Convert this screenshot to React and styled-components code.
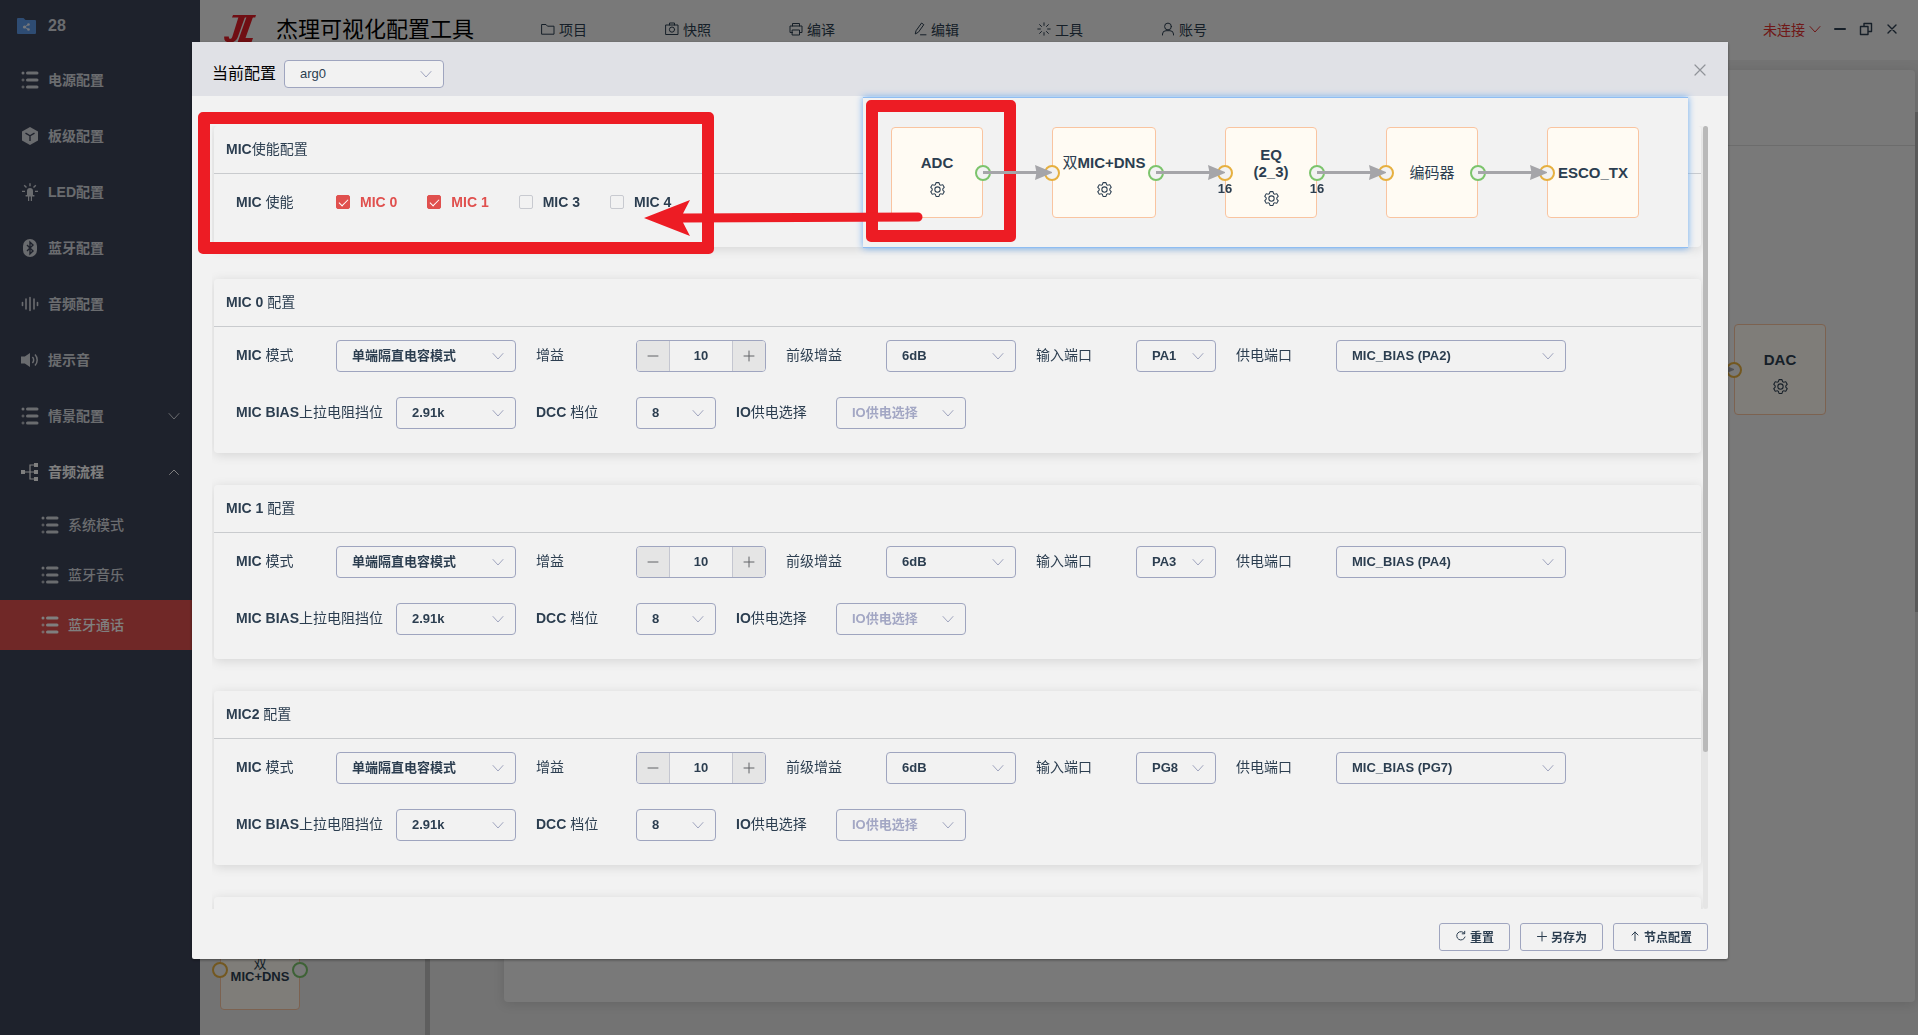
import React, { useId } from "react";
import styled, { createGlobalStyle } from "styled-components";

const GlobalStyle = createGlobalStyle`
  * { box-sizing: border-box; }
  html, body, #root { height: 100%; }
  body {
    margin: 0;
    overflow: hidden;
    font-family: "Liberation Sans", "Noto Sans CJK SC", sans-serif;
    font-size: 14px;
    color: #2c3e50;
  }
  button, input, select { font-family: inherit; color: inherit; }
  button { padding: 0; border: 0; background: none; cursor: pointer; }
`;

/* ---------- icons ---------- */

const Stroke = ({ size = 14, box = 14, width = 1, children }) => (
  <svg
    width={size}
    height={size}
    viewBox={`0 0 ${box} ${box}`}
    fill="none"
    stroke="currentColor"
    strokeWidth={width}
    strokeLinecap="round"
    strokeLinejoin="round"
    aria-hidden="true"
  >
    {children}
  </svg>
);

const Chevron = ({ up }) => (
  <Stroke size={12} box={12}>
    <path d={up ? "M1.5 8.5 6 4l4.5 4.5" : "M1 3.5 6 9l5-5.5"} />
  </Stroke>
);

const Gear = () => (
  <svg width="17" height="17" viewBox="0 0 1024 1024" fill="currentColor" aria-hidden="true">
    <path d="M600.704 64a32 32 0 0 1 30.464 22.208l35.2 109.376c14.784 7.232 28.928 15.36 42.432 24.512l112.384-24.192a32 32 0 0 1 34.432 15.36L944.32 364.8a32 32 0 0 1-4.032 37.504l-77.12 85.12a357.12 357.12 0 0 1 0 49.024l77.12 85.248a32 32 0 0 1 4.032 37.504l-88.704 153.6a32 32 0 0 1-34.432 15.296L708.8 803.904c-13.44 9.088-27.648 17.28-42.368 24.512l-35.264 109.376A32 32 0 0 1 600.704 960H423.296a32 32 0 0 1-30.464-22.208L357.696 828.48a351.616 351.616 0 0 1-42.56-24.64l-112.32 24.256a32 32 0 0 1-34.432-15.36L79.68 659.2a32 32 0 0 1 4.032-37.504l77.12-85.248a357.12 357.12 0 0 1 0-48.896l-77.12-85.248A32 32 0 0 1 79.68 364.8l88.704-153.6a32 32 0 0 1 34.432-15.296l112.32 24.256c13.568-9.152 27.776-17.408 42.56-24.64l35.2-109.312A32 32 0 0 1 423.232 64H600.64zm-23.424 64H446.72l-36.352 113.088-24.512 11.968a294.113 294.113 0 0 0-34.816 20.096l-22.656 15.36-116.224-25.088-65.28 113.152 79.68 88.192-1.92 27.136a293.12 293.12 0 0 0 0 40.192l1.92 27.136-79.808 88.192 65.344 113.152 116.224-25.024 22.656 15.296a294.113 294.113 0 0 0 34.816 20.096l24.512 11.968L446.72 896h130.688l36.48-113.152 24.448-11.904a288.282 288.282 0 0 0 34.752-20.096l22.592-15.296 116.288 25.024 65.28-113.152-79.744-88.192 1.92-27.136a293.12 293.12 0 0 0 0-40.256l-1.92-27.136 79.808-88.128-65.344-113.152-116.288 24.96-22.592-15.232a287.616 287.616 0 0 0-34.752-20.096l-24.448-11.904L577.344 128zM512 320a192 192 0 1 1 0 384 192 192 0 0 1 0-384zm0 64a128 128 0 1 0 0 256 128 128 0 0 0 0-256z" />
  </svg>
);

const ListIcon = () => (
  <svg width="18" height="18" viewBox="0 0 18 18" fill="currentColor" aria-hidden="true">
    <rect x="5" y="0.5" width="12.5" height="3" rx="1.5" />
    <rect x="5" y="7.5" width="12.5" height="3" rx="1.5" />
    <rect x="5" y="14.5" width="12.5" height="3" rx="1.5" />
    <circle cx="2" cy="2" r="1.5" />
    <circle cx="2" cy="9" r="1" fill="none" stroke="currentColor" />
    <circle cx="2" cy="16" r="1" fill="none" stroke="currentColor" />
  </svg>
);

const sideIcons = {
  list: <ListIcon />,
  cube: (
    <svg width="18" height="18" viewBox="0 0 18 18" aria-hidden="true">
      <path d="M9 0l8 4.4v9.2L9 18l-8-4.4V4.4z" fill="currentColor" />
      <path d="M4.5 6.2L9 8.8l4.5-2.6M9 8.8V14" fill="none" stroke="#3d4459" strokeWidth="1.4" />
    </svg>
  ),
  led: (
    <svg width="18" height="18" viewBox="0 0 18 18" fill="currentColor" aria-hidden="true">
      <path d="M6 12V8a3 3 0 0 1 6 0v4h1.4v1.6H11V18H9.8v-4.4H8.2V18H7v-4.4H4.6V12z" />
      <path
        d="M9 .3v3M3.2 2.2l2.3 2.3M14.8 2.2l-2.3 2.3M1 8.4h3M14 8.4h3"
        stroke="currentColor"
        strokeWidth="1.4"
      />
    </svg>
  ),
  bluetooth: (
    <svg width="18" height="18" viewBox="0 0 18 18" aria-hidden="true">
      <rect x="2" y="0" width="14" height="18" rx="7" fill="currentColor" />
      <path d="M6 6l6 6-3 2.8V3.2L12 6l-6 6" fill="none" stroke="#3d4459" strokeWidth="1.4" />
    </svg>
  ),
  wave: (
    <Stroke size={18} box={18} width={1.6}>
      <path d="M1.5 7.5v3M5 4v10M9 2.5v13M13 4v10M16.5 7.5v3" />
    </Stroke>
  ),
  sound: (
    <svg width="18" height="18" viewBox="0 0 18 18" aria-hidden="true">
      <path d="M0 5.5h3.8L9 2v14l-5.2-3.5H0z" fill="currentColor" />
      <path
        d="M11.4 6a4.2 4.2 0 0 1 0 6M14 3.5a8 8 0 0 1 0 11"
        fill="none"
        stroke="currentColor"
        strokeWidth="1.5"
      />
    </svg>
  ),
  flow: (
    <svg width="18" height="18" viewBox="0 0 18 18" aria-hidden="true">
      <path d="M2 9h13M15 2H9v14h6" fill="none" stroke="currentColor" strokeWidth="1.2" />
      <path
        d="M0 7h4v4H0zM13 0h4v4h-4zM13 7h4v4h-4zM13 14h4v4h-4z"
        fill="currentColor"
      />
    </svg>
  ),
};

const menuIcons = {
  folder: <path d="M1 2.5h4l1.5 1.7H13v8H1z" />,
  camera: (
    <>
      <path d="M1 3h12v9.5H1zM4.5 3V1h5v2" />
      <circle cx="7" cy="7.6" r="2.6" />
    </>
  ),
  printer: (
    <>
      <path d="M3.5 4V1.5h7V4M3.5 10.5H1V4h12v6.5h-2.5" />
      <path d="M3.5 8h7v5h-7z" />
    </>
  ),
  edit: <path d="M3.2 8.5 8.6 1l2.2 1.7-5.4 7.5-2.8 1.6zM7.5 12.8H13" />,
  spark: (
    <path d="M7 .8v2.6M7 10.6v2.6M.8 7h2.6M10.6 7h2.6M2.6 2.6l1.9 1.9M9.5 9.5l1.9 1.9M2.6 11.4l1.9-1.9M9.5 4.5l1.9-1.9" />
  ),
  user: (
    <>
      <circle cx="7" cy="4.5" r="3.4" />
      <path d="M1.5 13v-1a3.5 3.5 0 0 1 3.5-3.3h4A3.5 3.5 0 0 1 12.5 12v1" />
    </>
  ),
};

const Logo = () => (
  <svg width="32" height="28" viewBox="0 0 32 28" fill="#e01d26" aria-hidden="true">
    <path d="M9 0H32l-.8 2.6H8z" />
    <path d="M14.5 2H21l-7 19.5C12.6 25.5 10 27.5 5.5 27.5 1.5 27.5-.2 25.5.2 21.5h4.6c0 1.7.4 2.3 1.4 2.3 1.1 0 1.7-.7 2.2-2.3z" />
    <path d="M22.5 2H29l-7.5 21H29l-1.6 4.5H13.5z" />
  </svg>
);

/* ---------- text with heavy Latin and regular Chinese glyphs ---------- */

const Latin = styled.b`
  font-weight: 700;
`;

const Mixed = ({ children }) =>
  children
    .split(/([\x20-\x7e]+)/)
    .filter(Boolean)
    .map((run, i) => (/^[\x20-\x7e]+$/.test(run) ? <Latin key={i}>{run}</Latin> : run));

/* ---------- application shell ---------- */

const Shell = styled.div`
  isolation: isolate;
  display: flex;
  height: 100vh;
  background: #e6e6e6;
`;

const Sidebar = styled.nav`
  flex: 0 0 200px;
  background: #3d4459;
  color: #d5d8de;
`;

const SideHead = styled.div`
  display: flex;
  align-items: center;
  gap: 12px;
  height: 52px;
  padding-left: 17px;
  font-size: 16px;
  font-weight: 700;
`;

const SideItem = styled.a`
  display: flex;
  align-items: center;
  gap: 9px;
  height: ${(p) => (p.$sub ? 50 : 56)}px;
  padding: 0 20px 0 ${(p) => (p.$sub ? 41 : 21)}px;
  color: ${(p) => (p.$bright ? "#ffffff" : "inherit")};
  background: ${(p) => (p.$active ? "#e0504e" : "transparent")};
  font-weight: ${(p) => (p.$sub ? 500 : 600)};
  text-decoration: none;

  span {
    flex: 1;
    padding-bottom: 2px;
  }
`;

const Main = styled.div`
  flex: 1;
  min-width: 0;
  display: flex;
  flex-direction: column;
`;

const TopBar = styled.header`
  flex: 0 0 60px;
  display: flex;
  align-items: center;
  padding: 0 19px 2px 24px;
  background: #f2f2f2;
`;

const AppTitle = styled.h1`
  margin: 0 28px 0 20px;
  padding-top: 2px;
  font-size: 22px;
  line-height: 28px;
  font-weight: 400;
  color: #000;
`;

const TopMenu = styled.nav`
  display: flex;
  flex: 1;
`;

const TopMenuItem = styled.button`
  display: flex;
  align-items: center;
  justify-content: center;
  gap: 4px;
  width: 124px;
  font-size: 14px;
`;

const WindowTools = styled.div`
  display: flex;
  align-items: center;
  gap: 12px;

  button { display: flex; }
`;

const Connection = styled.button`
  align-items: center;
  gap: 4px;
  font-size: 14px;
  color: #e0302f;
`;

const Workspace = styled.div`
  flex: 1;
  min-height: 0;
  display: flex;
`;

const Palette = styled.aside`
  position: relative;
  flex: 0 0 230px;
  border-right: 5px solid #bcbcbc;
`;

const CanvasArea = styled.section`
  flex: 1;
  display: flex;
  padding: 10px 0 33px 74px;
`;

const CanvasCard = styled.div`
  position: relative;
  flex: 1;
  background: #f2f2f2;
  border-radius: 4px;
  box-shadow: 0 2px 12px rgba(0, 0, 0, 0.12);
`;

const CanvasHead = styled.div`
  height: 76px;
  border-bottom: 1px solid #d8d8d8;
`;

const CanvasScroll = styled.div`
  width: 3px;
  padding-top: 42px;

  &::before {
    content: "";
    display: block;
    height: 500px;
    background: #bcbcbc;
  }
`;

const Pin = styled.div`
  position: absolute;
  ${(p) => p.$at}
`;

/* ---------- flow nodes ---------- */

const NodeBox = styled.div`
  position: relative;
  flex: none;
  display: flex;
  flex-direction: column;
  align-items: center;
  justify-content: center;
  width: ${(p) => p.$width}px;
  height: ${(p) => p.$height}px;
  border: 1px solid #f9c4a0;
  border-radius: 4px;
  background: #fffbf3;
  font-size: ${(p) => (p.$small ? 13 : 15)}px;
  line-height: ${(p) => (p.$small ? 13 : 17)}px;
  text-align: center;
  white-space: pre;
`;

const GearSlot = styled.div`
  display: flex;
  justify-content: center;
  height: 20px;
  padding-top: 10px;

  svg { flex: none; }
`;

const Port = styled.i`
  position: absolute;
  top: 50%;
  ${(p) => p.$side}: -1px;
  width: 16px;
  height: 16px;
  border: 2px solid ${(p) => (p.$side === "left" ? "#e6b040" : "#7cc46c")};
  border-radius: 50%;
  background: #f2f2f2;
  transform: translate(${(p) => (p.$side === "left" ? "-50%" : "50%")}, -50%);
`;

const PortNote = styled.span`
  position: absolute;
  top: 53px;
  ${(p) => p.$side}: -9px;
  width: 16px;
  font-size: 13px;
  line-height: 15px;
  font-weight: 700;
`;

const Wire = styled.svg`
  position: relative;
  z-index: 1;
  flex: none;
  display: block;
`;

const FlowNode = ({ text, width = 92, height = 91, small, gear, inPort, outPort, note }) => (
  <NodeBox $width={width} $height={height} $small={small}>
    {inPort && <Port $side="left" />}
    {outPort && <Port $side="right" />}
    <div>
      <Mixed>{text}</Mixed>
    </div>
    {gear && (
      <GearSlot>
        <Gear />
      </GearSlot>
    )}
    {note && <PortNote $side="left">{note}</PortNote>}
    {note && <PortNote $side="right">{note}</PortNote>}
  </NodeBox>
);

const Connector = () => (
  <Wire width="69" height="15" viewBox="0 0 69 15" aria-hidden="true">
    <path d="M0 7.5h56" stroke="#a5a5a9" strokeWidth="3" />
    <path d="M52 0 70 7.5 52 15 53.5 7.5z" fill="#a5a5a9" />
  </Wire>
);

const FlowPanel = styled.div`
  position: absolute;
  top: 55px;
  right: 40px;
  display: flex;
  align-items: center;
  height: 151px;
  padding: 0 49px 0 28px;
  background: #f2f2f2;
  border: solid #8fbdf2;
  border-width: 1px 0;
  box-shadow: 0 0 7px #6aaaf0;
`;

/* ---------- dialog ---------- */

const Mask = styled.div`
  position: fixed;
  inset: 0;
  display: flex;
  padding: 42px 190px 76px 192px;
  background: rgba(0, 0, 0, 0.5);
`;

const Dialog = styled.section`
  position: relative;
  flex: 1;
  min-width: 0;
  display: flex;
  flex-direction: column;
  background: #f2f2f2;
  border-radius: 2px;
  box-shadow: 0 1px 3px rgba(0, 0, 0, 0.4);
`;

const DialogHead = styled.header`
  display: flex;
  justify-content: space-between;
  align-items: flex-start;
  padding: 18px 20px 8px;
  background: #e0e1e6;
`;

const ConfigPicker = styled.div`
  display: flex;
  align-items: center;
  gap: 8px;
  font-size: 16px;
  color: #000;

  label { padding-bottom: 4px; }
`;

const CloseButton = styled.button`
  display: flex;
  align-items: center;
  justify-content: center;
  width: 16px;
  height: 20px;
  color: #909399;
`;

const DialogBody = styled.div`
  flex: 1;
  min-height: 0;
  display: flex;
  margin: 30px 20px 0;
`;

const Viewport = styled.div`
  flex: 1;
  min-width: 0;
  display: flex;
  flex-direction: column;
  gap: 32px;
  padding: 0 2px;
  overflow: hidden;
`;

const ScrollTrack = styled.div`
  flex: 0 0 5px;
  border-radius: 3px;
  background: #e5e5e5;
`;

const ScrollThumb = styled.div`
  height: 80%;
  border-radius: 3px;
  background: #b9b9b9;
`;

const Card = styled.section`
  flex: none;
  border-radius: 4px;
  background: #f2f2f2;
  box-shadow: 0 2px 12px rgba(0, 0, 0, 0.12);
`;

const CardTitle = styled.h2`
  margin: 0;
  height: 48px;
  padding: 0 12px;
  border-bottom: 1px solid #c9cbce;
  font-size: 14px;
  line-height: 46px;
  font-weight: 400;
`;

const CardRows = styled.div`
  display: flex;
  flex-direction: column;
  gap: 25px;
  padding: 13px 22px ${(p) => p.$bottom || 24}px;
`;

const FormRow = styled.div`
  display: flex;
  align-items: center;
  gap: 20px;
  height: ${(p) => p.$height || 32}px;
`;

const Field = styled.div`
  display: flex;
  align-items: center;
`;

const FieldLabel = styled.label`
  width: ${(p) => p.$width || 100}px;
  padding-bottom: 2px;
  line-height: 20px;
  white-space: nowrap;
`;

const GroupLabel = styled.span`
  width: 100px;
  line-height: 20px;
`;

const SelectBox = styled.div`
  display: grid;
  align-items: center;
  width: ${(p) => p.$width}px;
  color: #9fa4be;

  > * { grid-area: 1 / 1; }
  > svg { justify-self: end; margin-right: 12px; pointer-events: none; }
`;

const NativeSelect = styled.select`
  appearance: none;
  width: 100%;
  height: ${(p) => (p.$small ? 28 : 32)}px;
  padding: 0 28px 2px 15px;
  border: 1px solid #9fa5bf;
  border-radius: 4px;
  background: #f2f2f2;
  color: ${(p) => (p.$hint ? "#a3a7c4" : "#2c3e50")};
  font-size: 13px;
  font-weight: ${(p) => (p.$small ? 400 : 600)};
`;

const Select = ({ id, value, width, small, hint }) => (
  <SelectBox $width={width}>
    <NativeSelect id={id} $small={small} $hint={hint}>
      <option>{value}</option>
    </NativeSelect>
    <Chevron />
  </SelectBox>
);

const SelectField = ({ label, labelWidth, ...rest }) => {
  const id = useId();
  return (
    <Field>
      <FieldLabel htmlFor={id} $width={labelWidth}>
        <Mixed>{label}</Mixed>
      </FieldLabel>
      <Select id={id} {...rest} />
    </Field>
  );
};

const StepperBox = styled.div`
  display: flex;
  width: 130px;
  height: 32px;
  overflow: hidden;
  border: 1px solid #9fa5bf;
  border-radius: 4px;

  button {
    flex: 0 0 32px;
    display: flex;
    align-items: center;
    justify-content: center;
    background: #e5e5e5;
    color: #606266;
  }

  input {
    flex: 1;
    min-width: 0;
    padding: 0 0 2px;
    border: solid #c4c6d0;
    border-width: 0 1px;
    background: #f2f2f2;
    font-size: 13px;
    font-weight: 600;
    text-align: center;
  }
`;

const StepperField = ({ label, value }) => {
  const id = useId();
  return (
    <Field>
      <FieldLabel htmlFor={id}>
        <Mixed>{label}</Mixed>
      </FieldLabel>
      <StepperBox>
        <button type="button" aria-label="-">
          <Stroke size={12} box={12}>
            <path d="M1 6h10" />
          </Stroke>
        </button>
        <input id={id} type="text" defaultValue={value} />
        <button type="button" aria-label="+">
          <Stroke size={12} box={12}>
            <path d="M1 6h10M6 1v10" />
          </Stroke>
        </button>
      </StepperBox>
    </Field>
  );
};

const CheckGroup = styled.div`
  display: flex;
  gap: 30px;
`;

const CheckLabel = styled.label`
  display: flex;
  align-items: center;
  gap: 10px;
  font-weight: 700;
  color: #2c3e50;

  &:has(input:checked) { color: #e0504e; }

  input {
    appearance: none;
    display: grid;
    place-items: center;
    width: 14px;
    height: 14px;
    margin: 0;
    border: 1px solid #c8cad0;
    border-radius: 2px;
  }

  input:checked {
    border-color: #e0504e;
    background: #e0504e;
  }

  input:checked::after {
    content: "";
    width: 4px;
    height: 8px;
    margin-bottom: 2px;
    border: solid #fff;
    border-width: 0 1px 1px 0;
    transform: rotate(45deg);
  }
`;

const DialogFoot = styled.footer`
  display: flex;
  justify-content: flex-end;
  gap: 10px;
  padding: 14px 20px 8px;
`;

const FootButton = styled.button`
  && {
    display: flex;
    align-items: center;
    gap: 3px;
    height: 28px;
    padding: 0 15px 2px;
    border: 1px solid #9fa5bf;
    border-radius: 3px;
    font-size: 12px;
    font-weight: 600;
  }
`;

/* ---------- red callouts drawn over the dialog ---------- */

const Callout = styled.div`
  position: absolute;
  border: 12px solid #ed1c24;
  border-radius: 5px;
  pointer-events: none;
  ${(p) => p.$at}
`;

const CalloutArrow = styled.svg`
  position: absolute;
  left: 452px;
  top: 158px;
  pointer-events: none;
`;

/* ---------- data ---------- */

const sideItems = [
  { text: "电源配置", icon: "list" },
  { text: "板级配置", icon: "cube" },
  { text: "LED配置", icon: "led" },
  { text: "蓝牙配置", icon: "bluetooth" },
  { text: "音频配置", icon: "wave" },
  { text: "提示音", icon: "sound" },
  { text: "情景配置", icon: "list", fold: "down" },
  { text: "音频流程", icon: "flow", fold: "up", bright: true },
  { text: "系统模式", icon: "list", sub: true },
  { text: "蓝牙音乐", icon: "list", sub: true },
  { text: "蓝牙通话", icon: "list", sub: true, active: true, bright: true },
];

const menuItems = [
  ["项目", "folder"],
  ["快照", "camera"],
  ["编译", "printer"],
  ["编辑", "edit"],
  ["工具", "spark"],
  ["账号", "user"],
];

const micSwitches = [
  ["MIC 0", true],
  ["MIC 1", true],
  ["MIC 3", false],
  ["MIC 4", false],
];

const micCards = [
  { title: "MIC 0 配置", input: "PA1", bias: "MIC_BIAS (PA2)" },
  { title: "MIC 1 配置", input: "PA3", bias: "MIC_BIAS (PA4)" },
  { title: "MIC2 配置", input: "PG8", bias: "MIC_BIAS (PG7)" },
];

const flowNodes = [
  { text: "ADC", gear: true, outPort: true },
  { text: "双MIC+DNS", width: 104, gear: true, inPort: true, outPort: true },
  { text: "EQ\n(2_3)", gear: true, inPort: true, outPort: true, note: "16" },
  { text: "编码器", inPort: true, outPort: true },
  { text: "ESCO_TX", inPort: true },
];

const MicCard = ({ title, input, bias }) => (
  <Card>
    <CardTitle>
      <Mixed>{title}</Mixed>
    </CardTitle>
    <CardRows>
      <FormRow>
        <SelectField label="MIC 模式" value="单端隔直电容模式" width={180} />
        <StepperField label="增益" value="10" />
        <SelectField label="前级增益" value="6dB" width={130} />
        <SelectField label="输入端口" value={input} width={80} />
        <SelectField label="供电端口" value={bias} width={230} />
      </FormRow>
      <FormRow>
        <SelectField label="MIC BIAS上拉电阻挡位" labelWidth={160} value="2.91k" width={120} />
        <SelectField label="DCC 档位" value="8" width={80} />
        <SelectField label="IO供电选择" value="IO供电选择" width={130} hint />
      </FormRow>
    </CardRows>
  </Card>
);

export default function App() {
  const configId = useId();
  return (
    <>
      <GlobalStyle />
      <Shell>
        <Sidebar>
          <SideHead>
            <svg width="19" height="16" viewBox="0 0 19 16" aria-hidden="true">
              <path d="M0 1a1 1 0 0 1 1-1h5.5l2 2H18a1 1 0 0 1 1 1v12a1 1 0 0 1-1 1H1a1 1 0 0 1-1-1z" fill="#5c98e6" />
              <path d="M11.5 6.5 7.5 9l4 2.5" fill="none" stroke="#e8eef8" />
              <g fill="#e8eef8">
                <circle cx="11.5" cy="6.5" r="1.3" />
                <circle cx="7.5" cy="9" r="1.6" />
                <circle cx="11.5" cy="11.5" r="1.3" />
              </g>
            </svg>
            28
          </SideHead>
          {sideItems.map((item) => (
            <SideItem
              key={item.text}
              href="#"
              $sub={item.sub}
              $active={item.active}
              $bright={item.bright}
            >
              {sideIcons[item.icon]}
              <span>{item.text}</span>
              {item.fold && <Chevron up={item.fold === "up"} />}
            </SideItem>
          ))}
        </Sidebar>
        <Main>
          <TopBar>
            <Logo />
            <AppTitle>杰理可视化配置工具</AppTitle>
            <TopMenu>
              {menuItems.map(([text, icon]) => (
                <TopMenuItem key={text} type="button">
                  <Stroke>{menuIcons[icon]}</Stroke>
                  {text}
                </TopMenuItem>
              ))}
            </TopMenu>
            <WindowTools>
              <Connection type="button">
                未连接
                <Chevron />
              </Connection>
              <button type="button" aria-label="最小化">
                <Stroke width={2}>
                  <path d="M2 7h10" />
                </Stroke>
              </button>
              <button type="button" aria-label="还原">
                <Stroke width={1.4}>
                  <path d="M1.5 4.5h7.5v8h-7.5zM5 4.5v-3h7.5v8H9" />
                </Stroke>
              </button>
              <button type="button" aria-label="关闭">
                <Stroke width={1.4}>
                  <path d="M3 3l8 8M11 3l-8 8" />
                </Stroke>
              </button>
            </WindowTools>
          </TopBar>
          <Workspace>
            <Palette>
              <Pin $at="left: 20px; bottom: 25px;">
                <FlowNode text={"双\nMIC+DNS"} width={80} height={80} small inPort outPort />
              </Pin>
            </Palette>
            <CanvasArea>
              <CanvasCard>
                <CanvasHead />
                <Pin $at="right: 89px; top: 254px;">
                  <FlowNode text="DAC" gear inPort />
                </Pin>
                <Pin $at="right: 181px; top: 292px;">
                  <Connector />
                </Pin>
              </CanvasCard>
              <CanvasScroll />
            </CanvasArea>
          </Workspace>
        </Main>
      </Shell>

      <Mask>
        <Dialog role="dialog">
          <DialogHead>
            <ConfigPicker>
              <label htmlFor={configId}>当前配置</label>
              <Select id={configId} value="arg0" width={160} small />
            </ConfigPicker>
            <CloseButton type="button" aria-label="关闭">
              <Stroke size={16} box={16} width={1.2}>
                <path d="M3 3l10 10M13 3L3 13" />
              </Stroke>
            </CloseButton>
          </DialogHead>

          <DialogBody>
            <Viewport>
              <Card>
                <CardTitle>
                  <Mixed>MIC使能配置</Mixed>
                </CardTitle>
                <CardRows $bottom={30}>
                  <FormRow $height={30}>
                    <Field>
                      <GroupLabel>
                        <Mixed>MIC 使能</Mixed>
                      </GroupLabel>
                      <CheckGroup>
                        {micSwitches.map(([text, on]) => (
                          <CheckLabel key={text}>
                            <input type="checkbox" defaultChecked={on} />
                            {text}
                          </CheckLabel>
                        ))}
                      </CheckGroup>
                    </Field>
                  </FormRow>
                </CardRows>
              </Card>
              {micCards.map((card) => (
                <MicCard key={card.title} {...card} />
              ))}
              <Card>
                <CardTitle />
              </Card>
            </Viewport>
            <ScrollTrack>
              <ScrollThumb />
            </ScrollTrack>
          </DialogBody>

          <DialogFoot>
            <FootButton type="button">
              <Stroke size={12} box={12}>
                <path d="M9.5 3.5A4.2 4.2 0 1 0 10 7M9.7 1.3v2.5H7.2" />
              </Stroke>
              重置
            </FootButton>
            <FootButton type="button">
              <Stroke size={12} box={12}>
                <path d="M1.5 6.5h9M6 2v9" />
              </Stroke>
              另存为
            </FootButton>
            <FootButton type="button">
              <Stroke size={12} box={12}>
                <path d="M6 10.5V2M3 5l3-3 3 3" />
              </Stroke>
              节点配置
            </FootButton>
          </DialogFoot>

          <FlowPanel>
            {flowNodes.map((node, i) => (
              <React.Fragment key={node.text}>
                {i > 0 && <Connector />}
                <FlowNode {...node} />
              </React.Fragment>
            ))}
          </FlowPanel>

          <Callout $at="left: 6px; top: 70px; width: 516px; height: 142px;" />
          <Callout $at="left: 674px; top: 58px; width: 150px; height: 142px;" />
          <CalloutArrow width="280" height="36" viewBox="0 0 280 36" aria-hidden="true">
            <path d="M0 18 46 0 39 13.5 274 12.5a4.5 4.5 0 0 1 0 9L39 22.5 46 36z" fill="#ed1c24" />
          </CalloutArrow>
        </Dialog>
      </Mask>
    </>
  );
}
